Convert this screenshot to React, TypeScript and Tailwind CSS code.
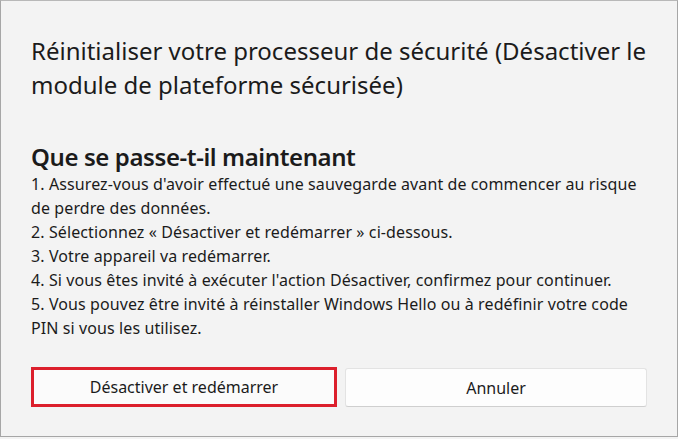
import React from "react";

const steps = [
  "1. Assurez-vous d'avoir effectué une sauvegarde avant de commencer au risque de perdre des données.",
  "2. Sélectionnez « Désactiver et redémarrer » ci-dessous.",
  "3. Votre appareil va redémarrer.",
  "4. Si vous êtes invité à exécuter l'action Désactiver, confirmez pour continuer.",
  "5. Vous pouvez être invité à réinstaller Windows Hello ou à redéfinir votre code PIN si vous les utilisez.",
];

export default function App() {
  return (
    <div
      className="w-[678px] h-[439px] bg-[#f3f3f3] overflow-hidden"
      style={{ fontFamily: '"Noto Sans", "Open Sans", sans-serif' }}
    >
      <div className="h-[437px] border border-[#a6a6a6] border-t-[#b8b8b8] flex flex-col px-[30px] text-[#1b1b1b]">
        <h1 className="mt-[33px] text-[24px] leading-[34px] font-normal">
          Réinitialiser votre processeur de sécurité (Désactiver le module de plateforme sécurisée)
        </h1>

        <h2 className="mt-[40px] text-[24px] leading-[30px] font-semibold tracking-[-0.4px]">
          Que se passe-t-il maintenant
        </h2>
        <div className="text-[16px] leading-[24px] tracking-[0.1px]">
          {steps.map((s) => (
            <p key={s}>{s}</p>
          ))}
        </div>

        <div className="mt-[27px] flex gap-2">
          <button className="flex-1 h-[40px] bg-[#fbfbfb] border-[3px] border-[#dc1f2c] text-[16px] text-[#1b1b1b]">
            Désactiver et redémarrer
          </button>
          <button className="flex-1 h-[39px] mt-px bg-[#fdfdfd] border border-[#e3e3e3] border-b-[#cfcfcf] rounded-[3px] text-[16px] text-[#1b1b1b]">
            Annuler
          </button>
        </div>
      </div>
    </div>
  );
}
